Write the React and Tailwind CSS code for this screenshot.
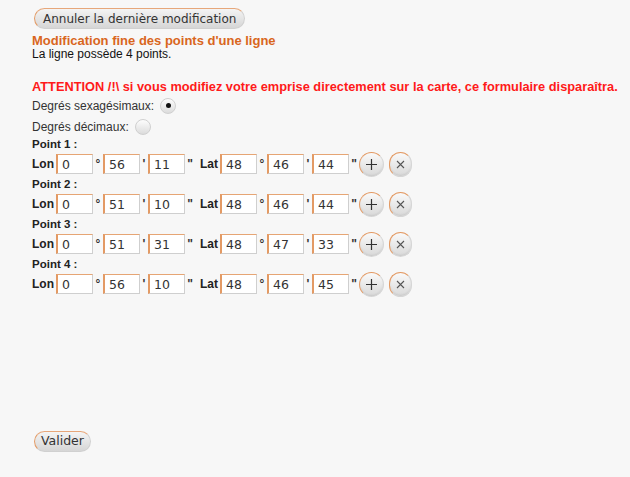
import React from "react";

const points = [
  { lon: ["0", "56", "11"], lat: ["48", "46", "44"] },
  { lon: ["0", "51", "10"], lat: ["48", "46", "44"] },
  { lon: ["0", "51", "31"], lat: ["48", "47", "33"] },
  { lon: ["0", "56", "10"], lat: ["48", "46", "45"] },
];

const Field = ({ value }) => (
  <input
    readOnly
    value={value}
    className="w-[37px] h-[20px] bg-white border border-[#cfcfcf] border-l-2 border-l-[#e39a64] border-t-[#e6a574] pl-[4px] text-[12.5px] text-[#333] outline-none"
    style={{ fontFamily: '"DejaVu Sans", sans-serif' }}
  />
);

const Sym = ({ children, narrow }) => (
  <span
    className={`${narrow ? "w-[8px]" : "w-[10px]"} text-center text-[12px] font-bold text-[#333] leading-none`}
  >
    {children}
  </span>
);

const RoundBtn = ({ children, wide }) => (
  <button
    className={`${wide ? "w-[25px]" : "w-[23px]"} h-[25px] rounded-full flex items-center justify-center border-[1.5px] border-t-[#e39a64] border-l-[#e39a64] border-r-[#d6d6d6] border-b-[#d6d6d6] bg-gradient-to-b from-[#fafafa] to-[#d9d9d9] text-[#333] shadow-[inset_0_-1px_2px_rgba(0,0,0,0.08)]`}
  >
    {children}
  </button>
);

const Radio = ({ checked }) => (
  <span className="ml-[6px] w-[16px] h-[16px] rounded-full bg-gradient-to-b from-[#fdfdfd] to-[#dcdcdc] border border-[#d0d0d0] flex items-center justify-center">
    {checked && <span className="w-[5px] h-[5px] rounded-full bg-[#111]" />}
  </span>
);

export default function App() {
  return (
    <div
      className="w-[630px] h-[477px] bg-[#f7f7f7] pt-[8px] pl-[32px] text-[#222] flex flex-col"
      style={{ fontFamily: '"Liberation Sans", Arial, sans-serif' }}
    >
      <button
        className="self-start ml-[2px] h-[21px] px-[8px] rounded-full border border-[#d0d0d0] border-l-[#e39a64] border-t-[#e7a77a] bg-gradient-to-b from-[#f4f4f4] to-[#d6d6d6] text-[12px] text-[#333] leading-none"
        style={{ fontFamily: '"DejaVu Sans", sans-serif' }}
      >
        Annuler la dernière modification
      </button>

      <div className="mt-[4px] text-[13px] leading-[15px] font-bold text-[#d9661d]">
        Modification fine des points d'une ligne
      </div>
      <div className="text-[12px] leading-[13px] text-[#111]">
        La ligne possède 4 points.
      </div>

      <div className="mt-[19px] text-[12.8px] leading-[14px] font-bold text-[#ff1a1a]">
        ATTENTION /!\ si vous modifiez votre emprise directement sur la carte, ce formulaire disparaîtra.
      </div>

      <div className="mt-[1px] h-[21px] flex items-center text-[12px] text-[#333]">
        Degrés sexagésimaux:
        <Radio checked />
      </div>
      <div className="h-[21px] flex items-center text-[12px] text-[#333]">
        Degrés décimaux:
        <Radio />
      </div>

      {points.map((p, i) => (
        <div key={i} className="flex flex-col">
          <div className="h-[14px] text-[11.5px] leading-[14px] font-bold text-[#222]">
            Point {i + 1} :
          </div>
          <div className="h-[26px] flex items-center text-[12px]">
            <span className="font-bold mr-[2px] text-[#222]">Lon</span>
            <Field value={p.lon[0]} />
            <Sym>°</Sym>
            <Field value={p.lon[1]} />
            <Sym narrow>'</Sym>
            <Field value={p.lon[2]} />
            <Sym>"</Sym>
            <span className="ml-[5px] font-bold mr-[2px] text-[#222]">Lat</span>
            <Field value={p.lat[0]} />
            <Sym>°</Sym>
            <Field value={p.lat[1]} />
            <Sym narrow>'</Sym>
            <Field value={p.lat[2]} />
            <Sym>"</Sym>
            <RoundBtn wide>
              <svg width="13" height="13" viewBox="0 0 13 13">
                <path d="M6.5 1v11M1 6.5h11" stroke="#333" strokeWidth="1.2" />
              </svg>
            </RoundBtn>
            <span className="w-[5px]" />
            <RoundBtn>
              <svg width="9" height="9" viewBox="0 0 9 9">
                <path d="M1 1l7 7M8 1l-7 7" stroke="#555" strokeWidth="1.1" />
              </svg>
            </RoundBtn>
          </div>
        </div>
      ))}

      <button
        className="self-start mt-[134px] ml-[2px] h-[21px] px-[6px] rounded-full border border-[#d0d0d0] border-l-[#e39a64] border-t-[#e7a77a] bg-gradient-to-b from-[#f4f4f4] to-[#d6d6d6] text-[12.5px] text-[#333] leading-none"
        style={{ fontFamily: '"DejaVu Sans", sans-serif' }}
      >
        Valider
      </button>
    </div>
  );
}
